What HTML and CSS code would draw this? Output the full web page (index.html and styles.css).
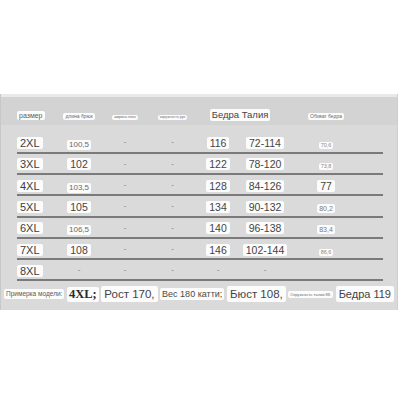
FILE: index.html
```html
<!DOCTYPE html>
<html lang="ru">
<head>
<meta charset="utf-8">
<link rel="stylesheet" href="styles.css">
</head>
<body>
<div class="sheet">
  <div class="band"></div>
  <div class="head">
    <span class="c1"><span class="tag h-size">размер</span></span>
    <span class="c2"><span class="tag h-small">длина брюк</span></span>
    <span class="c3"><span class="tag h-tiny">ширина плеч</span></span>
    <span class="c4"><span class="tag h-tiny">окружность рук</span></span>
    <span class="c56"><span class="tag h-big">Бедра Талия</span></span>
    <span class="c7"><span class="tag h-small">Обхват бедра</span></span>
  </div>
  <div class="rows">
    <div class="row first">
      <span class="c1"><span class="tag size">2XL</span></span>
      <span class="c2"><span class="tag v-sm">100,5</span></span>
      <span class="c3 dash">-</span>
      <span class="c4 dash">-</span>
      <span class="c5"><span class="tag v">116</span></span>
      <span class="c6"><span class="tag v">72-114</span></span>
      <span class="c7"><span class="tag v-xs">70,6</span></span>
    </div>
    <div class="row">
      <span class="c1"><span class="tag size">3XL</span></span>
      <span class="c2"><span class="tag v">102</span></span>
      <span class="c3 dash">-</span>
      <span class="c4 dash">-</span>
      <span class="c5"><span class="tag v">122</span></span>
      <span class="c6"><span class="tag v">78-120</span></span>
      <span class="c7"><span class="tag v-xs">73,8</span></span>
    </div>
    <div class="row">
      <span class="c1"><span class="tag size">4XL</span></span>
      <span class="c2"><span class="tag v-sm">103,5</span></span>
      <span class="c3 dash">-</span>
      <span class="c4 dash">-</span>
      <span class="c5"><span class="tag v">128</span></span>
      <span class="c6"><span class="tag v">84-126</span></span>
      <span class="c7"><span class="tag v">77</span></span>
    </div>
    <div class="row">
      <span class="c1"><span class="tag size">5XL</span></span>
      <span class="c2"><span class="tag v">105</span></span>
      <span class="c3 dash">-</span>
      <span class="c4 dash">-</span>
      <span class="c5"><span class="tag v">134</span></span>
      <span class="c6"><span class="tag v">90-132</span></span>
      <span class="c7"><span class="tag v-s2">80,2</span></span>
    </div>
    <div class="row">
      <span class="c1"><span class="tag size">6XL</span></span>
      <span class="c2"><span class="tag v-sm">106,5</span></span>
      <span class="c3 dash">-</span>
      <span class="c4 dash">-</span>
      <span class="c5"><span class="tag v">140</span></span>
      <span class="c6"><span class="tag v">96-138</span></span>
      <span class="c7"><span class="tag v-s2">83,4</span></span>
    </div>
    <div class="row">
      <span class="c1"><span class="tag size">7XL</span></span>
      <span class="c2"><span class="tag v">108</span></span>
      <span class="c3 dash">-</span>
      <span class="c4 dash">-</span>
      <span class="c5"><span class="tag v">146</span></span>
      <span class="c6"><span class="tag v">102-144</span></span>
      <span class="c7"><span class="tag v-xs">86,6</span></span>
    </div>
    <div class="row">
      <span class="c1"><span class="tag size">8XL</span></span>
      <span class="c2 dash">-</span>
      <span class="c3 dash">-</span>
      <span class="c4 dash">-</span>
      <span class="c5 dash">-</span>
      <span class="c6 dash">-</span>
      <span class="c7"></span>
    </div>
  </div>
  <div class="model">
    <span class="tag m-label">Примерка модели:</span>
    <span class="tag m-size">4XL;</span>
    <span class="tag m-big">Рост 170,</span>
    <span class="tag m-mid">Вес 180 катти;</span>
    <span class="tag m-big">Бюст 108,</span>
    <span class="tag m-tiny">Окружность талии 88.</span>
    <span class="tag m-big2">Бедра 119</span>
  </div>
</div>
</body>
</html>
```
FILE: styles.css
```css
body {
  margin: 0;
  background: #ffffff;
  font-family: "Liberation Sans", Arial, sans-serif;
  color: #444;
}

.sheet {
  margin-top: 94px;
  width: 396px;
  background: #dadada;
  border-left: 1px solid #c8c8c8;
  border-right: 1px solid #cecece;
  padding-bottom: 3px;
}

.band {
  height: 3px;
  background: #e9e9e9;
}

.head {
  height: 28px;
  box-sizing: border-box;
  padding: 3px 0 0 16px;
  background: #d3d3d3;
  display: grid;
  grid-template-columns: 40px 44px 48px 47px 94px 70px;
  align-items: center;
}

.rows {
  margin: 0 14px 0 16px;
}

.row {
  height: 21.3px;
  box-sizing: border-box;
  border-bottom: 2px solid #7a7a7a;
  display: grid;
  grid-template-columns: 40px 44px 48px 47px 44px 50px 70px;
  align-items: center;
}

.row.first {
  height: 28.7px;
  padding-top: 7px;
}

.c1 { justify-self: start; }
.c2, .c3, .c4, .c5, .c6, .c7, .c56 { justify-self: center; }
.c56 { margin-right: 6px; }
.c7 { margin-left: 2px; }

.tag {
  display: inline-block;
  background: #fcfcfc;
  border-radius: 2px;
  white-space: nowrap;
}

.h-size { font-size: 7px; line-height: 9px; padding: 0 2px; color: #5a5a5a; }
.h-small { font-size: 5px; line-height: 7px; padding: 0 2px; color: #6a6a6a; }
.h-tiny { font-size: 3.6px; line-height: 5px; padding: 0 2px; color: #6a6a6a; }
.h-big { font-size: 9.5px; line-height: 12px; padding: 0 2px; color: #444; }

.size { font-size: 11px; line-height: 12px; padding: 0 3px; color: #3d3d3d; }
.v { font-size: 10.5px; line-height: 12px; padding: 0 3px; color: #444; }
.v-sm { font-size: 8px; line-height: 10px; padding: 0 2px; color: #6a6a6a; }
.v-s2 { font-size: 7px; line-height: 9px; padding: 0 2px; color: #7a7a7a; }
.v-xs { font-size: 5.5px; line-height: 7px; padding: 0 2px; color: #888; }

.dash {
  font-size: 8px;
  color: #7a7a7a;
}

.model {
  display: flex;
  justify-content: space-between;
  align-items: center;
  height: 26px;
  padding: 0 3px 0 3px;
}

.m-label { font-size: 6.5px; line-height: 10px; padding: 0 2px; color: #5a5a5a; }
.m-size { font-family: "Liberation Serif", serif; font-weight: bold; font-size: 12.5px; line-height: 15px; padding: 0 2px; color: #2a2a2a; }
.m-big { font-size: 11.5px; line-height: 16px; padding: 0 3px; color: #444; }
.m-mid { font-size: 9px; line-height: 12px; padding: 0 2px; color: #4a4a4a; }
.m-tiny { font-size: 4px; line-height: 7px; padding: 0 2px; color: #6a6a6a; }
.m-big2 { font-size: 11px; line-height: 16px; padding: 0 3px; color: #444; }
```
